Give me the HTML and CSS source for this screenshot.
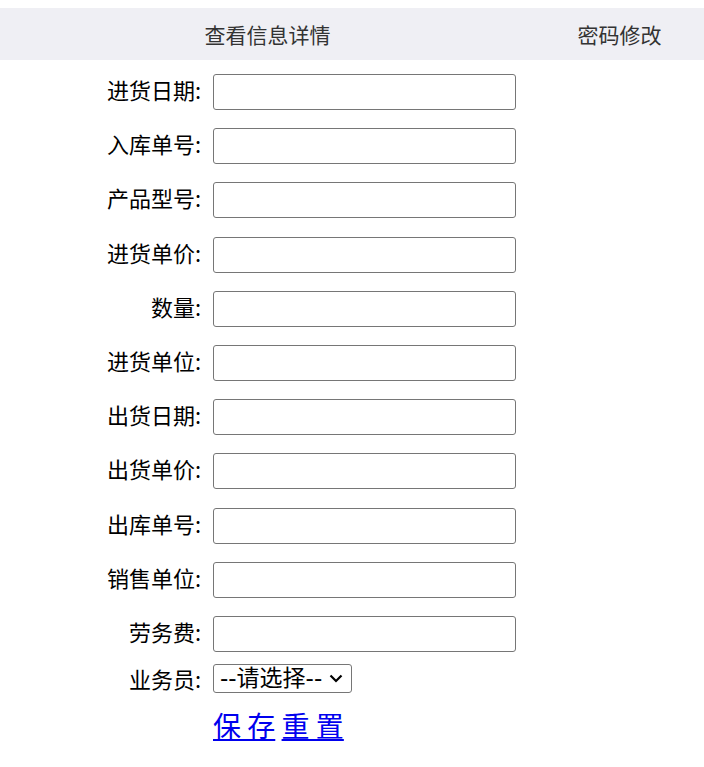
FILE: index.html
```html
<!DOCTYPE html>
<html lang="zh">
<head>
<meta charset="utf-8">
<title>信息详情</title>
<link rel="stylesheet" href="styles.css">
</head>
<body>
<nav class="tabs">
  <div class="tab tab-main">查看信息详情</div>
  <div class="tab tab-side">密码修改</div>
</nav>
<form class="form">
  <label class="lbl">进货日期:</label><input class="field" type="text">
  <label class="lbl">入库单号:</label><input class="field" type="text">
  <label class="lbl">产品型号:</label><input class="field" type="text">
  <label class="lbl">进货单价:</label><input class="field" type="text">
  <label class="lbl">数量:</label><input class="field" type="text">
  <label class="lbl">进货单位:</label><input class="field" type="text">
  <label class="lbl">出货日期:</label><input class="field" type="text">
  <label class="lbl">出货单价:</label><input class="field" type="text">
  <label class="lbl">出库单号:</label><input class="field" type="text">
  <label class="lbl">销售单位:</label><input class="field" type="text">
  <label class="lbl">劳务费:</label><input class="field" type="text">
  <label class="lbl lbl-sel">业务员:</label>
  <div class="sel-wrap">
    <select class="sel"><option>--请选择--</option></select>
    <svg class="chev" width="14" height="9" viewBox="0 0 14 9"><polyline points="1.5,1.5 7,7 12.5,1.5" fill="none" stroke="#000" stroke-width="2.2"/></svg>
  </div>
  <div></div>
  <div class="actions"><a href="#" class="act">保 存</a> <a href="#" class="act">重 置</a></div>
</form>
</body>
</html>
```
FILE: styles.css
```css
html, body {
  margin: 0;
  padding: 0;
  background: #fff;
  font-family: "Noto Sans CJK SC", "Noto Sans", sans-serif;
}
.tabs {
  margin-top: 8px;
  height: 52px;
  background: #efeff4;
  display: grid;
  grid-template-columns: 535px 1fr;
  align-items: center;
}
.tab {
  text-align: center;
  font-size: 21px;
  color: #333;
  line-height: 52px;
}
.form {
  display: grid;
  grid-template-columns: 201px 303px;
  column-gap: 12px;
  row-gap: 18.2px;
  padding-top: 14px;
  align-items: start;
}
.lbl {
  text-align: right;
  font-size: 22px;
  color: #000;
  line-height: 31px;
  white-space: nowrap;
}
.field {
  box-sizing: border-box;
  width: 303px;
  height: 36px;
  margin: 0;
  border: 1px solid #767676;
  border-radius: 3px;
  background: #fff;
  font-size: 20px;
}
.lbl-sel {
  margin-top: -6px;
  line-height: 29px;
}
.sel-wrap {
  margin-top: -6px;
  height: 29px;
  position: relative;
  width: 139px;
}
.sel {
  -webkit-appearance: none;
  appearance: none;
  box-sizing: border-box;
  width: 139px;
  height: 29px;
  margin: 0;
  padding: 0 26px 0 6px;
  border: 1px solid #767676;
  border-radius: 3px;
  background: #fff;
  color: #000;
  font-family: "DejaVu Sans", "Noto Sans CJK SC", sans-serif;
  font-size: 23px;
  line-height: 27px;
}
.chev {
  position: absolute;
  left: 116px;
  top: 10px;
  pointer-events: none;
}
.actions {
  font-size: 28px;
  line-height: 40px;
  margin-top: -6px;
}
.act {
  color: #0000ee;
}
```
